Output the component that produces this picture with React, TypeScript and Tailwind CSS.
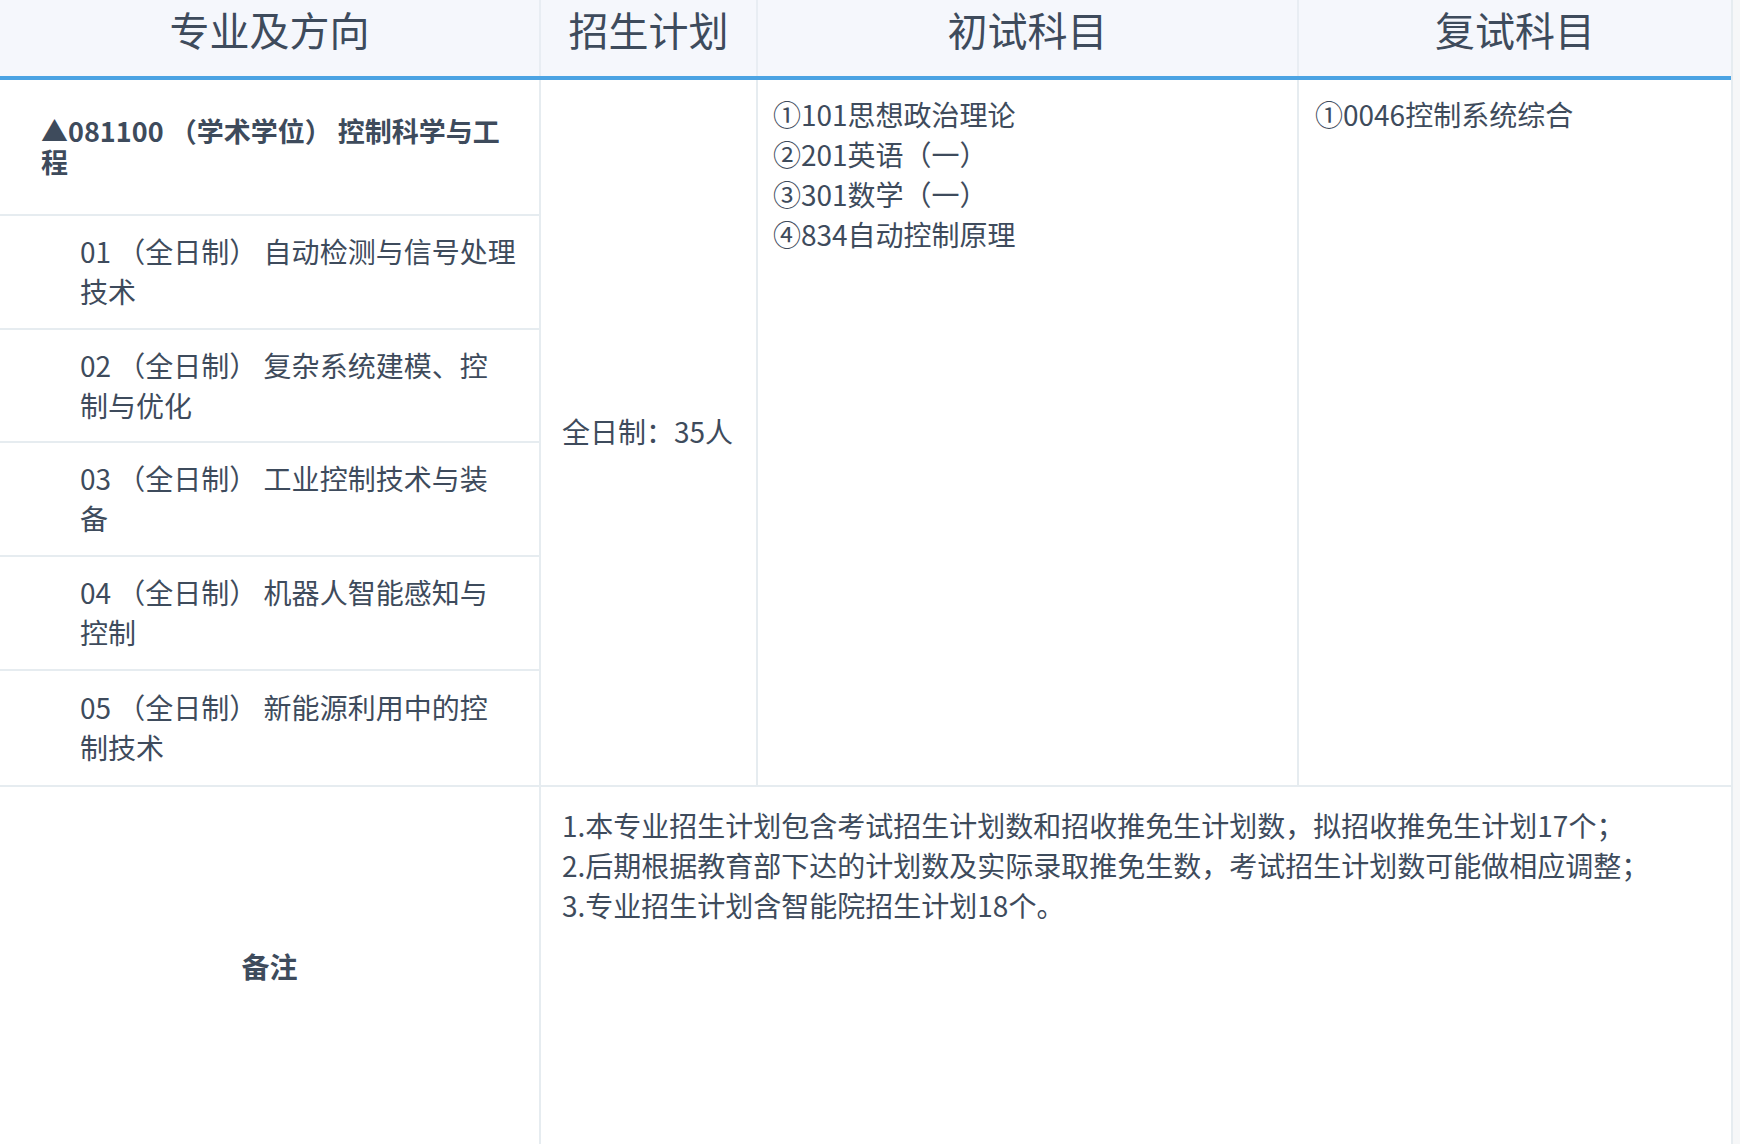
const font = { fontFamily: '"Noto Sans CJK SC", "Noto Sans", sans-serif' };

const directions = [
  { lines: ["01 （全日制） 自动检测与信号处理", "技术"], h: "h-[114px]" },
  { lines: ["02 （全日制） 复杂系统建模、控", "制与优化"], h: "h-[113px]" },
  { lines: ["03 （全日制） 工业控制技术与装", "备"], h: "h-[114px]" },
  { lines: ["04 （全日制） 机器人智能感知与", "控制"], h: "h-[114px]" },
  { lines: ["05 （全日制） 新能源利用中的控", "制技术"], h: "h-[114px]" },
];

const firstExam = ["①101思想政治理论", "②201英语（一）", "③301数学（一）", "④834自动控制原理"];

const remarks = [
  "1.本专业招生计划包含考试招生计划数和招收推免生计划数，拟招收推免生计划17个；",
  "2.后期根据教育部下达的计划数及实际录取推免生数，考试招生计划数可能做相应调整；",
  "3.专业招生计划含智能院招生计划18个。",
];

const App = () => {
  return (
    <div className="flex w-[1740px] bg-white text-[#3e4b5c]" style={font}>
      <div className="w-[1733px] border-r-2 border-[#e6ecf0]">
        {/* Header */}
        <div className="flex h-[80px] border-b-4 border-[#4ba3e3] bg-[#f5f7fc] text-[40px] leading-[40px]">
          <div className="w-[541px] border-r-2 border-[#e8edf3] pt-[9px] text-center">专业及方向</div>
          <div className="w-[217px] border-r-2 border-[#e8edf3] pt-[9px] text-center">招生计划</div>
          <div className="w-[541px] border-r-2 border-[#e8edf3] pt-[9px] text-center">初试科目</div>
          <div className="w-[432px] pt-[9px] text-center">复试科目</div>
        </div>

        {/* Body */}
        <div className="flex border-b-2 border-[#e6ecf0] text-[28px] leading-[40px]">
          <div className="w-[541px] border-r-2 border-[#e6ecf0]">
            <div className="flex h-[136px] items-center border-b-2 border-[#e6ecf0] pb-[3px] pl-[41px] text-[27px] font-bold leading-[31px]">
              <p className="w-[475px]">▲081100 （学术学位） 控制科学与工程</p>
            </div>
            {directions.map((d, i) => (
              <div
                key={i}
                className={`flex ${d.h} flex-col justify-center pb-[2px] pl-[80px] ${i < directions.length - 1 ? "border-b-2 border-[#e6ecf0]" : ""}`}
              >
                {d.lines.map((l) => (
                  <span key={l} className="whitespace-nowrap">{l}</span>
                ))}
              </div>
            ))}
          </div>
          <div className="flex w-[217px] items-center border-r-2 border-[#e6ecf0] pb-[4px] pl-[21px]">全日制：35人</div>
          <div className="flex w-[541px] flex-col border-r-2 border-[#e6ecf0] pl-[15px] pt-[14px]">
            {firstExam.map((s) => (
              <span key={s} className="whitespace-nowrap">{s}</span>
            ))}
          </div>
          <div className="flex w-[432px] flex-col pl-[16px] pt-[14px]">
            <span>①0046控制系统综合</span>
          </div>
        </div>

        {/* Remarks */}
        <div className="flex h-[362px] text-[28px] leading-[40px]">
          <div className="flex w-[541px] items-center justify-center border-r-2 border-[#e6ecf0] pb-[4px] font-bold">备注</div>
          <div className="flex flex-1 flex-col pl-[21px] pt-[18px]">
            {remarks.map((r) => (
              <span key={r} className="whitespace-nowrap">{r}</span>
            ))}
          </div>
        </div>
      </div>
      <div className="flex-1 bg-[#f6f7f8]" />
    </div>
  );
};

export default App;
